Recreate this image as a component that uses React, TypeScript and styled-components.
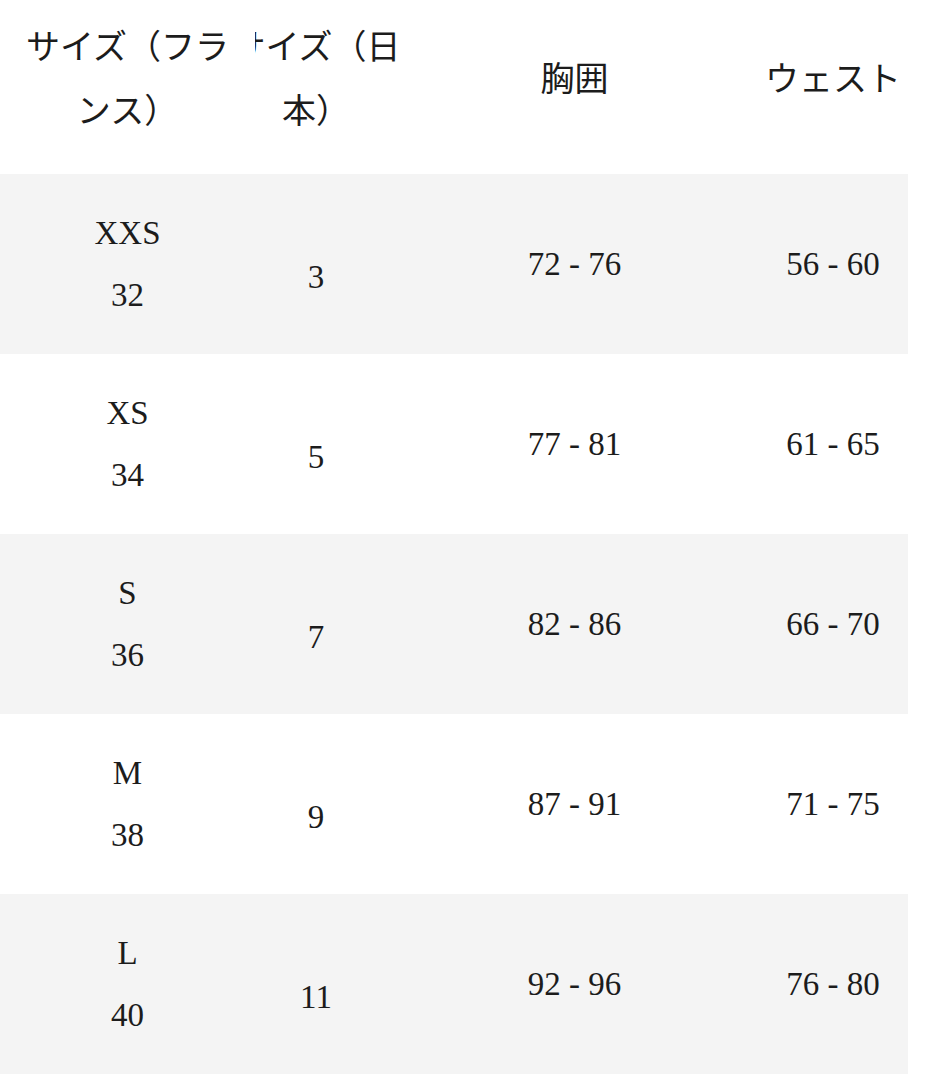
import styled, { createGlobalStyle } from "styled-components";

const GlobalStyle = createGlobalStyle`
  body {
    margin: 0;
    background: #ffffff;
    font-family: "Liberation Serif", "Noto Sans CJK JP", serif;
    color: #1c1c1c;
  }
`;

type SizeRow = {
  letter: string;
  fr: string;
  jp: string;
  bust: string;
  waist: string;
};

const rows: SizeRow[] = [
  { letter: "XXS", fr: "32", jp: "3", bust: "72 - 76", waist: "56 - 60" },
  { letter: "XS", fr: "34", jp: "5", bust: "77 - 81", waist: "61 - 65" },
  { letter: "S", fr: "36", jp: "7", bust: "82 - 86", waist: "66 - 70" },
  { letter: "M", fr: "38", jp: "9", bust: "87 - 91", waist: "71 - 75" },
  { letter: "L", fr: "40", jp: "11", bust: "92 - 96", waist: "76 - 80" },
];

const Table = styled.div`
  width: 908px;
  display: flex;
  flex-direction: column;
`;

const Row = styled.div<{ $striped?: boolean; $head?: boolean }>`
  display: grid;
  grid-template-columns: 255px 122px 395px 122px;
  padding-right: 14px;
  height: ${(p) => (p.$head ? "174px" : "180px")};
  background: ${(p) => (p.$striped ? "#f4f4f4" : "#ffffff")};
`;

const Cell = styled.div<{ $nudge?: number }>`
  display: flex;
  align-items: center;
  justify-content: center;
  text-align: center;
  white-space: nowrap;
  font-size: 33px;
  line-height: 62px;
  padding-top: ${(p) => (p.$nudge ? `${p.$nudge}px` : "0")};
`;

const HeadCell = styled(Cell)<{ $clipLeft?: boolean }>`
  font-size: 34px;
  line-height: 64px;
  padding-bottom: 14px;
  clip-path: ${(p) => (p.$clipLeft ? "inset(0 -300px 0 0)" : "none")};
`;

const WideText = styled.span`
  flex: none;
  width: 172px;
  text-align: center;
`;

const Stack = styled.div`
  display: flex;
  flex-direction: column;
  align-items: center;
`;

export default function App() {
  return (
    <>
      <GlobalStyle />
      <Table>
        <Row $head>
          <HeadCell>
            <span>
              サイズ（フラ
              <br />
              ンス）
            </span>
          </HeadCell>
          <HeadCell $clipLeft>
            <WideText>
              サイズ（日
              <br />
              本）
            </WideText>
          </HeadCell>
          <HeadCell>胸囲</HeadCell>
          <HeadCell>ウェスト</HeadCell>
        </Row>
        {rows.map((r, i) => (
          <Row key={r.letter} $striped={i % 2 === 0}>
            <Cell>
              <Stack>
                <span>{r.letter}</span>
                <span>{r.fr}</span>
              </Stack>
            </Cell>
            <Cell $nudge={26}>{r.jp}</Cell>
            <Cell>{r.bust}</Cell>
            <Cell>{r.waist}</Cell>
          </Row>
        ))}
      </Table>
    </>
  );
}
